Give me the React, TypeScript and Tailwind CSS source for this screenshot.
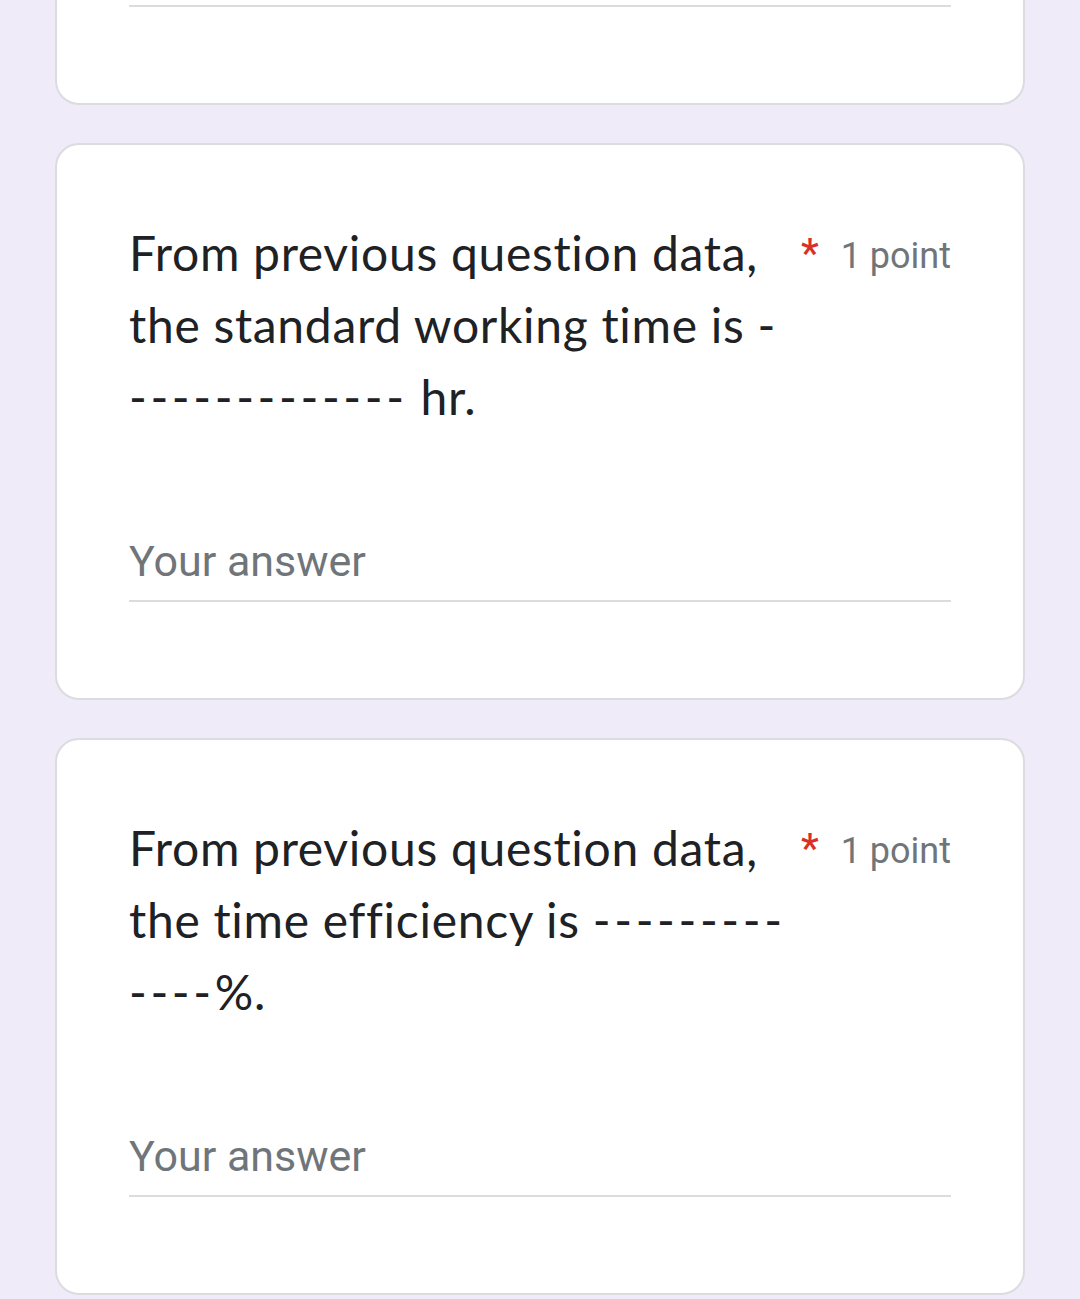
import React from "react";

function Title({ parts }: { parts: string[][] }) {
  return (
    <div
      className="w-[670px] text-[48px] leading-[72px] tracking-[0.7px] text-[#202124] [font-variant-ligatures:none]"
      style={{ fontFamily: "Lato, 'Open Sans', sans-serif" }}
    >
      {parts.map((line, i) => (
        <div key={i} className="whitespace-pre">
          {line.map((seg, j) =>
            /^-+$/.test(seg) ? (
              <span key={j} className="tracking-[3.6px]">{seg}</span>
            ) : (
              <span key={j}>{seg}</span>
            )
          )}
        </div>
      ))}
    </div>
  );
}

function Question({ parts }: { parts: string[][] }) {
  return (
    <div className="mt-[38px] rounded-[24px] border-2 border-[#dadce0] bg-white px-[72px] pt-[72px] pb-[96px]">
      <div className="flex items-start">
        <Title parts={parts} />
        <div className="ml-auto flex items-start pt-[12px]" style={{ fontFamily: "Roboto, sans-serif" }}>
          <span className="text-[40px] font-medium leading-[50px] text-[#d93025]">*</span>
          <span className="ml-[22px] text-[36px] leading-[54px] text-[#70757a]">1 point</span>
        </div>
      </div>
      <div className="mt-[101px] border-b-2 border-[#dadce0] pb-[12px]">
        <div className="text-[43px] leading-[54px] text-[#70757a]" style={{ fontFamily: "Roboto, sans-serif" }}>
          Your answer
        </div>
      </div>
    </div>
  );
}

export default function App() {
  return (
    <div className="h-[1299px] overflow-hidden bg-[#efebf8] px-[55px]">
      <div className="-mt-[99px] h-[204px] rounded-b-[24px] border-2 border-t-0 border-[#dadce0] bg-white px-[72px]">
        <div className="h-[106px] border-b-2 border-[#dadce0]" />
      </div>
      <Question
        parts={[["From previous question data,"], ["the standard working time is ", "-"], ["-------------", " hr."]]}
      />
      <Question
        parts={[["From previous question data,"], ["the time efficiency is ", "---------"], ["----", "%."]]}
      />
    </div>
  );
}
